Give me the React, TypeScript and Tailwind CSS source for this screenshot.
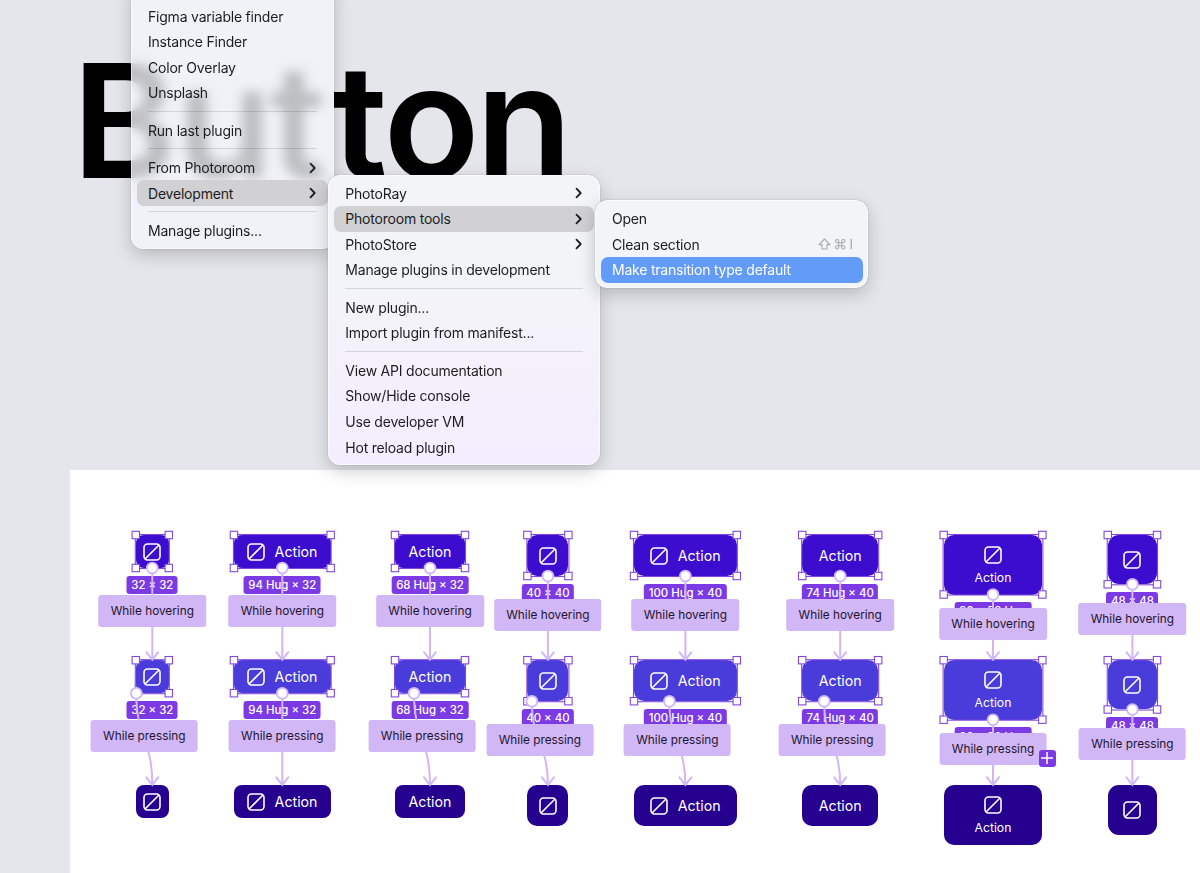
import React from 'react';
import { Command } from 'lucide-react';

type MenuEntry =
  | { type: 'separator' }
  | { type: 'item'; label: string; submenu?: boolean; state?: 'open' | 'active'; shortcut?: boolean };

const item = (label: string, extra: { submenu?: boolean; state?: 'open' | 'active'; shortcut?: boolean } = {}): MenuEntry => ({
  type: 'item',
  label,
  ...extra,
});
const separator: MenuEntry = { type: 'separator' };

const pluginMenu: MenuEntry[] = [
  item('Figma variable finder'),
  item('Instance Finder'),
  item('Color Overlay'),
  item('Unsplash'),
  separator,
  item('Run last plugin'),
  separator,
  item('From Photoroom', { submenu: true }),
  item('Development', { submenu: true, state: 'open' }),
  separator,
  item('Manage plugins...'),
];

const developmentMenu: MenuEntry[] = [
  item('PhotoRay', { submenu: true }),
  item('Photoroom tools', { submenu: true, state: 'open' }),
  item('PhotoStore', { submenu: true }),
  item('Manage plugins in development'),
  separator,
  item('New plugin...'),
  item('Import plugin from manifest...'),
  separator,
  item('View API documentation'),
  item('Show/Hide console'),
  item('Use developer VM'),
  item('Hot reload plugin'),
];

const toolsMenu: MenuEntry[] = [
  item('Open'),
  item('Clean section', { shortcut: true }),
  item('Make transition type default', { state: 'active' }),
];

type Variant = {
  cx: number;
  width: number;
  height: number;
  radius: number;
  size: string;
  kind: 'icon' | 'label' | 'both' | 'stacked';
  shift: number; // horizontal offset where the pressing connection starts
};

const variants: Variant[] = [
  { cx: 152.3, width: 33, height: 33, radius: 8, size: '32 × 32', kind: 'icon', shift: -16 },
  { cx: 282.3, width: 96.7, height: 33, radius: 8, size: '94 Hug × 32', kind: 'both', shift: 0 },
  { cx: 430, width: 70, height: 33, radius: 8, size: '68 Hug × 32', kind: 'label', shift: -16 },
  { cx: 547.9, width: 41, height: 41, radius: 10, size: '40 × 40', kind: 'icon', shift: -16 },
  { cx: 685.4, width: 102.8, height: 41, radius: 10, size: '100 Hug × 40', kind: 'both', shift: -16 },
  { cx: 840.2, width: 76, height: 41, radius: 10, size: '74 Hug × 40', kind: 'label', shift: -16 },
  { cx: 993, width: 98.7, height: 59.5, radius: 10, size: '96 × 58 Hug', kind: 'stacked', shift: 0 },
  { cx: 1132.4, width: 49.3, height: 49.3, radius: 11, size: '48 × 48', kind: 'icon', shift: 0 },
];

const ROWS = [535, 660.2, 785.4];
const FILLS = ['bg-[#3c0dcf]', 'bg-[#4a3cdb]', 'bg-[#26008f]'];

function SlashIcon() {
  return (
    <svg width="18" height="18" viewBox="0 0 18 18" fill="none" stroke="white" strokeWidth="1.6" className="shrink-0">
      <rect x="1" y="1" width="16" height="16" rx="3.4" />
      <path d="M2 16 16 2" />
    </svg>
  );
}

function ChevronIcon() {
  return (
    <svg width="8" height="12" viewBox="0 0 8 12" fill="none" stroke="#1d1d20" strokeWidth="1.8" strokeLinecap="round" strokeLinejoin="round">
      <path d="M1.5 1.7 5.7 6 1.5 10.3" />
    </svg>
  );
}

function ShiftIcon() {
  return (
    <svg width="13" height="12" viewBox="0 0 13 12" fill="none" stroke="currentColor" strokeWidth="1.1" strokeLinejoin="round">
      <path d="M6.5 1 12 6.6H9V11H4V6.6H1Z" />
    </svg>
  );
}

function Menu({ entries }: { entries: MenuEntry[] }) {
  return (
    <ul className="flex flex-col text-[14px] tracking-[-0.015em] text-[#1d1d20]">
      {entries.map((entry, i) => {
        if (entry.type === 'separator') {
          return (
            <li key={i} className="flex h-[11.8px] items-center px-[11.5px]">
              <div className="h-px w-full bg-black/12" />
            </li>
          );
        }
        const highlight =
          entry.state === 'open' ? 'bg-[#d1d1d4]' : entry.state === 'active' ? 'bg-[#629bf8] text-white' : '';
        return (
          <li
            key={i}
            className={`flex h-[25.6px] items-center justify-between rounded-[7px] pr-[11.5px] pl-[11.5px] whitespace-nowrap ${highlight}`}
          >
            <span>{entry.label}</span>
            {entry.submenu && <ChevronIcon />}
            {entry.shortcut && (
              <span className="flex items-center gap-[3px] text-[#a9a9ae]">
                <ShiftIcon />
                <Command size={12.5} strokeWidth={2} />
                <span className="w-[2px] text-[13.5px]">I</span>
              </span>
            )}
          </li>
        );
      })}
    </ul>
  );
}

function ButtonNode({ variant, row }: { variant: Variant; row: number }) {
  const { cx, width, height, radius, kind } = variant;
  return (
    <div
      className={`absolute flex items-center justify-center font-normal text-white ${FILLS[row]} ${
        kind === 'stacked' ? 'flex-col gap-[4.5px] pt-[2px] text-[12.2px]' : 'gap-[9.5px] text-[14.2px]'
      }`}
      style={{ left: cx - width / 2, top: ROWS[row], width, height, borderRadius: radius }}
    >
      {kind !== 'label' && <SlashIcon />}
      {kind !== 'icon' && <span className="leading-[17px]">Action</span>}
    </div>
  );
}

function SizeBadge({ variant, row }: { variant: Variant; row: number }) {
  return (
    <div
      className="absolute flex h-[18.4px] -translate-x-1/2 items-center rounded-[3px] bg-[#7c3ae4] px-[4.5px] pt-px text-[11.4px] font-medium whitespace-nowrap text-white"
      style={{ left: variant.cx, top: ROWS[row] + variant.height + 7.7 }}
    >
      {variant.size}
    </div>
  );
}

function TriggerLabel({ variant, row }: { variant: Variant; row: number }) {
  const center = (ROWS[row] + variant.height + ROWS[row + 1]) / 2 - 3.1;
  return (
    <div
      className={`absolute flex h-8 -translate-x-1/2 -translate-y-1/2 items-center justify-center rounded-[3px] bg-[#d1b7f5] pt-px text-[11.8px] font-normal whitespace-nowrap text-[#1e1430] ${
        row === 0 ? 'w-[107.6px]' : 'w-[106.8px]'
      }`}
      style={{ left: variant.cx + (row === 0 ? 0 : variant.shift / 2), top: center }}
    >
      {row === 0 ? 'While hovering' : 'While pressing'}
    </div>
  );
}

function Selection({ variant, row }: { variant: Variant; row: number }) {
  const left = variant.cx - variant.width / 2;
  const right = variant.cx + variant.width / 2;
  const top = ROWS[row];
  const bottom = top + variant.height;
  const corners = [
    [left, top],
    [right, top],
    [left, bottom],
    [right, bottom],
  ];
  return (
    <g stroke="#8347dc" strokeWidth="1.1">
      <rect x={left - 0.5} y={top - 0.5} width={right - left + 1} height={bottom - top + 1} fill="none" />
      {corners.map(([x, y]) => (
        <rect key={`${x}-${y}`} x={x - 3.7} y={y - 3.7} width="7.4" height="7.4" fill="white" />
      ))}
    </g>
  );
}

function Connection({ variant, row }: { variant: Variant; row: number }) {
  const { cx, height } = variant;
  const x = row === 0 ? cx : cx + variant.shift;
  const y = ROWS[row] + height;
  const end = ROWS[row + 1] - 0.5;
  const mid = (y + end) / 2;
  return (
    <g stroke="#d1b7f5" fill="none">
      <path d={`M${x} ${y}C${x} ${mid} ${cx} ${mid} ${cx} ${end}`} strokeWidth="2" />
      <path d={`M${cx - 6} ${end - 7.5} ${cx} ${end}l6-7.5`} strokeWidth="2" strokeLinecap="round" />
      <circle cx={x} cy={y} r="5.4" fill="white" strokeWidth="1.8" />
    </g>
  );
}

export default function App() {
  return (
    <div className="relative flex h-[873px] w-[1200px] flex-col overflow-hidden bg-[#e5e6eb] font-[Inter,sans-serif]">
      <header className="h-[470px] shrink-0 pt-[42px] pl-[72px]">
        <h1 className="flex text-[158px] leading-[158px] font-semibold text-black">
          <span>Bu</span>
          <span className="-ml-[3px]">t</span>
          <span className="ml-[6px]">t</span>
          <span className="-ml-[4px]">o</span>
          <span className="-ml-[4px]">n</span>
        </h1>
      </header>

      <main className="ml-[70px] flex-1 bg-white" />

      {variants.map((variant) => (
        <React.Fragment key={variant.cx}>
          {ROWS.map((_, row) => (
            <ButtonNode key={row} variant={variant} row={row} />
          ))}
          <SizeBadge variant={variant} row={0} />
          <SizeBadge variant={variant} row={1} />
        </React.Fragment>
      ))}

      <svg width="1200" height="873" className="absolute inset-0">
        {variants.map((variant) => (
          <g key={variant.cx}>
            {[0, 1].map((row) => (
              <Selection key={row} variant={variant} row={row} />
            ))}
            {[0, 1].map((row) => (
              <Connection key={row} variant={variant} row={row} />
            ))}
          </g>
        ))}
      </svg>

      {variants.map((variant) => (
        <React.Fragment key={variant.cx}>
          <TriggerLabel variant={variant} row={0} />
          <TriggerLabel variant={variant} row={1} />
        </React.Fragment>
      ))}

      <div className="absolute top-[749.5px] left-[1038.5px] flex size-[17.4px] items-center justify-center rounded-[3px] bg-[#7c3ae4]">
        <svg width="12" height="12" viewBox="0 0 12 12" stroke="white" strokeWidth="1.5">
          <path d="M6 0v12M0 6h12" />
        </svg>
      </div>

      <div className="absolute top-[-20.4px] left-[131px] w-[202.5px] rounded-[12px] border border-white/60 bg-[#f4f5fa]/78 px-[4.5px] pt-[22.7px] pb-[4.5px] shadow-[0_0_1px_rgba(0,0,0,0.5),0_6px_18px_rgba(0,0,0,0.2)] backdrop-blur-[6px]">
        <Menu entries={pluginMenu} />
      </div>

      <div className="absolute top-[174.6px] left-[328.3px] w-[271.7px] rounded-[12px] border border-white/60 bg-linear-to-b from-[#f3f4f8] from-35% to-[#f4edfe] px-[4.5px] pt-[4.8px] pb-[4.2px] shadow-[0_0_1px_rgba(0,0,0,0.5),0_6px_18px_rgba(0,0,0,0.2)]">
        <Menu entries={developmentMenu} />
      </div>

      <div className="absolute top-[200.1px] left-[595px] w-[273.4px] rounded-[12px] border border-white/60 bg-[#f3f4f8] px-[4.5px] pt-[4.8px] pb-[4.2px] shadow-[0_0_1px_rgba(0,0,0,0.5),0_6px_18px_rgba(0,0,0,0.2)]">
        <Menu entries={toolsMenu} />
      </div>
    </div>
  );
}
